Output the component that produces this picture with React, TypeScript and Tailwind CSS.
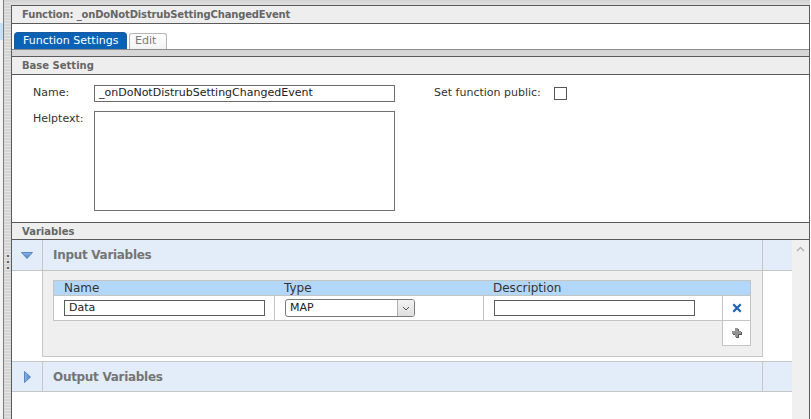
import React from "react";

function DownTri() {
  return (
    <svg width="12" height="7" viewBox="0 0 12 7">
      <defs>
        <linearGradient id="gd" x1="0" y1="0" x2="0" y2="1">
          <stop offset="0" stopColor="#8fb4e0" />
          <stop offset="1" stopColor="#4f86c6" />
        </linearGradient>
      </defs>
      <polygon points="0.5,0.5 11.5,0.5 6,6.5" fill="url(#gd)" stroke="#3f74b6" strokeWidth="0.8" />
    </svg>
  );
}

function RightTri() {
  return (
    <svg width="7" height="12" viewBox="0 0 7 12">
      <defs>
        <linearGradient id="gr" x1="0" y1="0" x2="1" y2="0">
          <stop offset="0" stopColor="#8fb4e0" />
          <stop offset="1" stopColor="#4f86c6" />
        </linearGradient>
      </defs>
      <polygon points="0.5,0.5 6.5,6 0.5,11.5" fill="url(#gr)" stroke="#3f74b6" strokeWidth="0.8" />
    </svg>
  );
}

function AccHeader({ title, open }: { title: string; open?: boolean }) {
  return (
    <div
      className={
        open
          ? "h-[31px] shrink-0 flex bg-[#e2edf9] border-b border-[#c6c6c6]"
          : "h-[31px] shrink-0 flex bg-[#e2edf9] border-y border-[#c6c6c6]"
      }
    >
      <div className="w-[31px] border-r border-[#c6c6c6] flex items-center justify-center">
        {open ? <DownTri /> : <RightTri />}
      </div>
      <div className="w-[720px] border-r border-[#c6c6c6] pl-[10px] flex items-center font-bold text-[12px] tracking-[-0.3px] text-[#757575]">
        {title}
      </div>
      <div className="flex-1" />
    </div>
  );
}

export default function App() {
  return (
    <div className="w-[811px] h-[419px] flex overflow-hidden bg-white text-[11px] text-[#333] font-['DejaVu_Sans',sans-serif]">
      {/* left strip */}
      <div className="w-[3px] flex flex-col bg-[#f3f3f3]">
        <div className="h-[23px]" />
        <div className="h-[17px] bg-[#c9e1f7]" />
      </div>
      {/* splitter */}
      <div className="w-[8px] border-l border-[#7d7d7d] bg-[repeating-linear-gradient(180deg,#d4d4d4_0px,#d4d4d4_2px,#e3e3e3_2px,#e3e3e3_3px)] flex flex-col items-center">
        <div className="mt-[255px] flex flex-col gap-[4px]">
          <div className="w-[2px] h-[2px] bg-[#666]" />
          <div className="w-[2px] h-[2px] bg-[#666]" />
          <div className="w-[2px] h-[2px] bg-[#666]" />
        </div>
      </div>
      {/* main panel */}
      <div className="w-[799px] flex flex-col">
        <div className="h-[5px] bg-gradient-to-b from-[#d2d2d2] to-[#e0e0e0]" />
        <div className="flex-1 min-h-0 flex flex-col border-x border-t border-[#5a5a5a]">
          <div className="h-[18px] shrink-0 border-b border-[#5a5a5a] bg-[#eeeeee] pl-[10px] flex items-center font-bold text-[10px] tracking-[-0.15px] text-[#666]">
            Function: _onDoNotDistrubSettingChangedEvent
          </div>
          <div className="h-[25px] shrink-0 flex items-end pl-[2px] gap-[2px]">
            <div className="w-[113px] h-[17px] rounded-t-[4px] bg-[#0a62b7] border border-[#1d5a9c] border-b-0 text-white pl-[8px] flex items-center">
              Function Settings
            </div>
            <div className="w-[38px] h-[16px] rounded-t-[3px] bg-gradient-to-b from-white to-[#f3f3f3] border border-[#b5b5b5] border-b-0 text-[#7a7a7a] pl-[5px] flex items-center">
              Edit
            </div>
          </div>
          <div className="h-[8px] shrink-0 border-t border-[#8c8c8c] border-b border-b-[#5a5a5a] bg-[#d7d7d7]" />
          <div className="h-[18px] shrink-0 border-b border-[#5a5a5a] bg-[#eeeeee] pl-[10px] flex items-center font-bold text-[10px] text-[#666]">
            Base Setting
          </div>
          <div className="h-[148px] shrink-0 border-b border-[#5a5a5a] pl-[21px] pt-[10px] flex flex-col">
            <div className="flex items-center h-[17px]">
              <div className="w-[61px]">Name:</div>
              <div className="w-[301px] h-[17px] border border-[#6b6b6b] pl-[4px] flex items-center text-[#222]">
                _onDoNotDistrubSettingChangedEvent
              </div>
              <div className="ml-[39px] w-[120px]">Set function public:</div>
              <div className="w-[13px] h-[13px] border border-[#555] bg-white" />
            </div>
            <div className="flex mt-[9px]">
              <div className="w-[61px]">Helptext:</div>
              <div className="w-[301px] h-[100px] border border-[#707070] bg-white" />
            </div>
          </div>
          <div className="h-[17px] shrink-0 border-b border-[#5a5a5a] bg-[#eeeeee] pl-[10px] flex items-center font-bold text-[10px] text-[#666]">
            Variables
          </div>
          {/* scroll area */}
          <div className="flex-1 min-h-0 flex">
            <div className="w-[780px] flex flex-col">
              <AccHeader title="Input Variables" open />
              <div className="flex h-[86px] shrink-0">
                <div className="w-[31px] border-r border-[#c6c6c6]" />
                <div className="w-[720px] border-r border-b border-[#c6c6c6] bg-[#efefef] pl-[10px] pt-[9px]">
                  <div className="w-[698px]">
                    <div className="h-[16px] border border-[#c4c4c4] bg-[#b3d7fb] flex items-center text-[12px] text-[#333]">
                      <div className="w-[221px] pl-[10px]">Name</div>
                      <div className="w-[209px] pl-[9px]">Type</div>
                      <div className="w-[239px] pl-[9px]">Description</div>
                    </div>
                    <div className="h-[25px] border-x border-b border-[#c4c4c4] bg-white flex">
                      <div className="w-[221px] border-r border-[#c4c4c4] flex items-center">
                        <div className="ml-[10px] w-[201px] h-[16px] border border-[#5c5c5c] pl-[4px] flex items-center text-[#222]">
                          Data
                        </div>
                      </div>
                      <div className="w-[209px] border-r border-[#c4c4c4] flex items-center">
                        <div className="ml-[10px] w-[130px] h-[18px] border border-[#7a7a7a] rounded-[3px] bg-white flex overflow-hidden">
                          <div className="flex-1 pl-[4px] flex items-center text-[#222]">MAP</div>
                          <div className="w-[17px] border-l border-[#b0b0b0] bg-gradient-to-b from-[#f2f2f2] to-[#dedede] flex items-center justify-center">
                            <svg width="8" height="5" viewBox="0 0 8 5">
                              <path d="M1 1 L4 4 L7 1" fill="none" stroke="#555" strokeWidth="1" />
                            </svg>
                          </div>
                        </div>
                      </div>
                      <div className="w-[239px] border-r border-[#c4c4c4] flex items-center">
                        <div className="ml-[10px] w-[201px] h-[16px] border border-[#5c5c5c] bg-white" />
                      </div>
                      <div className="flex-1 flex items-center justify-center">
                        <svg width="10" height="10" viewBox="0 0 10 10">
                          <path d="M1.3 1.3 L8.7 8.7 M8.7 1.3 L1.3 8.7" stroke="#1f63b5" strokeWidth="2.3" />
                        </svg>
                      </div>
                    </div>
                    <div className="flex h-[25px]">
                      <div className="w-[669px]" />
                      <div className="w-[29px] border-x border-b border-[#c4c4c4] bg-white flex items-center justify-center">
                        <svg width="12" height="12" viewBox="0 0 12 12">
                          <path d="M5 2 H8 V5 H11 V8 H8 V11 H5 V8 H2 V5 H5 Z" fill="#5a5a5a" />
                          <path d="M4 1 H7 V4 H10 V7 H7 V10 H4 V7 H1 V4 H4 Z" fill="#939393" />
                        </svg>
                      </div>
                    </div>
                  </div>
                </div>
              </div>
              <div className="h-[4px] shrink-0" />
              <AccHeader title="Output Variables" />
            </div>
            <div className="w-[17px] bg-[#f0f0f0] flex flex-col items-center">
              <svg className="mt-[6px]" width="9" height="6" viewBox="0 0 9 6">
                <path d="M1 5 L4.5 1.5 L8 5" fill="none" stroke="#b3b3b3" strokeWidth="1.5" />
              </svg>
            </div>
          </div>
        </div>
      </div>
      <div className="flex-1 bg-white" />
    </div>
  );
}
